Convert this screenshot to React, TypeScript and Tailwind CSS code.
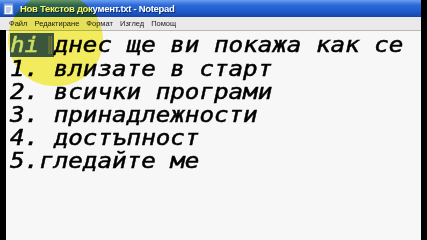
import React from "react";

const menu = ["Файл", "Редактиране", "Формат", "Изглед", "Помощ"];

const lines = [
  "1. влизате в старт",
  "2. всички програми",
  "3. принадлежности",
  "4. достъпност",
  "5.гледайте ме",
];

function NotepadIcon() {
  return (
    <svg width="11" height="12" viewBox="0 0 11 12">
      <rect x="1" y="0.5" width="9" height="11" fill="#f4f8ff" stroke="#5a7fb8" />
      <rect x="1" y="0.5" width="9" height="2" fill="#7fa6e0" />
      <line x1="3" y1="5" x2="8" y2="5" stroke="#8aa0c8" />
      <line x1="3" y1="7" x2="8" y2="7" stroke="#8aa0c8" />
      <line x1="3" y1="9" x2="7" y2="9" stroke="#8aa0c8" />
    </svg>
  );
}

export default function App() {
  return (
    <div className="relative w-[427px] h-[240px] overflow-hidden bg-black flex">
      <div className="flex flex-col w-[421px] h-full">
        {/* title bar */}
        <div className="h-[17px] flex items-center gap-[6px] pl-[3px] bg-[linear-gradient(to_bottom,#6a9ef0_0%,#2d6ad8_30%,#1f5ccc_65%,#1746a8_100%)]">
          <NotepadIcon />
          <span className="text-white font-bold text-[9.5px] leading-none tracking-[-0.3px] font-['Liberation_Sans',sans-serif] [text-shadow:1px_1px_0_#0a2a70]">
            Нов Текстов документ.txt - Notepad
          </span>
        </div>
        {/* menu bar */}
        <div className="h-[13px] flex items-center bg-[#e9e9e9] text-[7.5px] leading-none text-[#222] font-['Liberation_Sans',sans-serif] pl-[9px] gap-[7px]">
          {menu.map((m) => (
            <span key={m}>{m}</span>
          ))}
        </div>
        {/* text area */}
        <div className="flex-1 flex">
          <div className="w-[6px] bg-black" />
          <div className="flex-1 bg-[#f7f7f7] border-t border-[#b8b8b8] pt-[2px] pl-[4px] overflow-hidden">
            <div className="origin-left scale-x-[1.1] font-['DejaVu_Sans_Mono',monospace] italic text-[22px] leading-[23px] text-black [-webkit-text-stroke:0.5px_black] whitespace-pre">
              <div className="flex">
                <span className="bg-[#3c5a9b] text-[#d2eaff] [-webkit-text-stroke:0.5px_#d2eaff] h-[24px]">hi </span>
                <span className="relative">
                  <span className="absolute left-[-5px] top-[3px] h-[18px] w-[3px] border-x border-[#888] not-italic" />
                  днес ще ви покажа как се
                </span>
              </div>
              {lines.map((l) => (
                <div key={l}>{l}</div>
              ))}
            </div>
          </div>
        </div>
      </div>
      {/* cursor highlight */}
      <div className="absolute left-[8px] top-[-6px] w-[95px] h-[92px] rounded-full bg-[#faf24e] mix-blend-multiply opacity-90" />
    </div>
  );
}
